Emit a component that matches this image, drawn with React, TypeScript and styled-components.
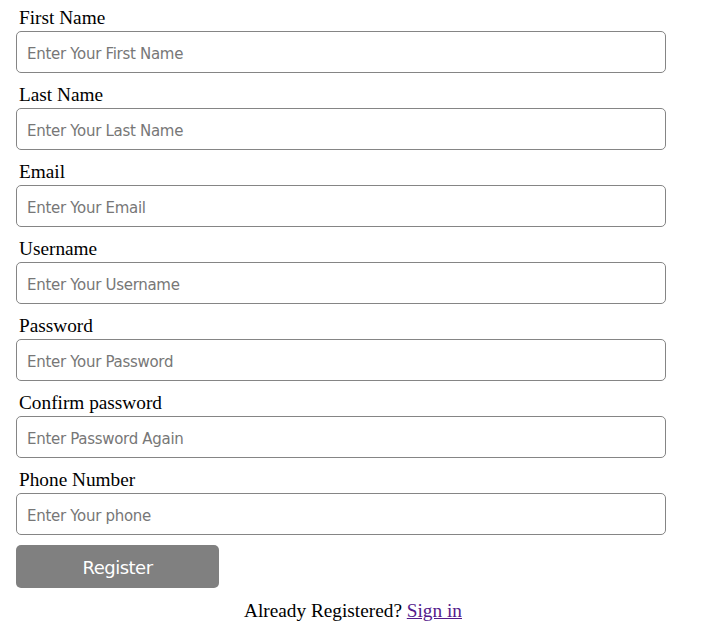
import React from "react";
import styled, { createGlobalStyle } from "styled-components";

const Global = createGlobalStyle`
  body {
    margin: 8px;
    font-family: "Liberation Serif", "Times New Roman", serif;
    background: #fff;
    color: #000;
  }
`;

const Form = styled.form`
  display: flex;
  flex-direction: column;
  padding: 0 8px;
`;

const Field = styled.div`
  display: flex;
  flex-direction: column;
  margin-bottom: 12px;
`;

const Label = styled.label`
  font-family: "Liberation Serif", "Times New Roman", serif;
  font-size: 19.3px;
  line-height: 20px;
  padding-left: 3px;
  margin-bottom: 3px;
`;

const Input = styled.input`
  box-sizing: border-box;
  width: 650px;
  height: 42px;
  border: 1px solid #858585;
  border-radius: 5px;
  padding: 3px 10px 0;
  font-family: "DejaVu Sans", Tahoma, sans-serif;
  font-size: 15px;
  letter-spacing: -0.3px;
  color: #000;
  outline: none;
  &::placeholder {
    color: #777;
  }
`;

const Button = styled.button`
  box-sizing: border-box;
  width: 203px;
  height: 43px;
  margin-top: -2px;
  padding-top: 2px;
  border: none;
  border-radius: 5px;
  background: #808080;
  color: #fff;
  font-family: "DejaVu Sans", Tahoma, sans-serif;
  font-size: 18px;
  letter-spacing: -0.5px;
  cursor: pointer;
`;

const Footer = styled.p`
  margin: 12px 0 0;
  padding-right: 4px;
  text-align: center;
  font-size: 19.3px;
  line-height: 21px;
`;

const Link = styled.a`
  color: #551a8b;
  text-decoration: underline;
`;

const fields = [
  ["First Name", "Enter Your First Name", "text"],
  ["Last Name", "Enter Your Last Name", "text"],
  ["Email", "Enter Your Email", "email"],
  ["Username", "Enter Your Username", "text"],
  ["Password", "Enter Your Password", "password"],
  ["Confirm password", "Enter Password Again", "password"],
  ["Phone Number", "Enter Your phone", "tel"],
];

export default function App() {
  return (
    <>
      <Global />
      <Form onSubmit={(e) => e.preventDefault()}>
        {fields.map(([label, ph, type]) => (
          <Field key={label}>
            <Label>{label}</Label>
            <Input type={type} placeholder={ph} />
          </Field>
        ))}
        <Button type="submit">Register</Button>
      </Form>
      <Footer>
        Already Registered? <Link href="#">Sign in</Link>
      </Footer>
    </>
  );
}
